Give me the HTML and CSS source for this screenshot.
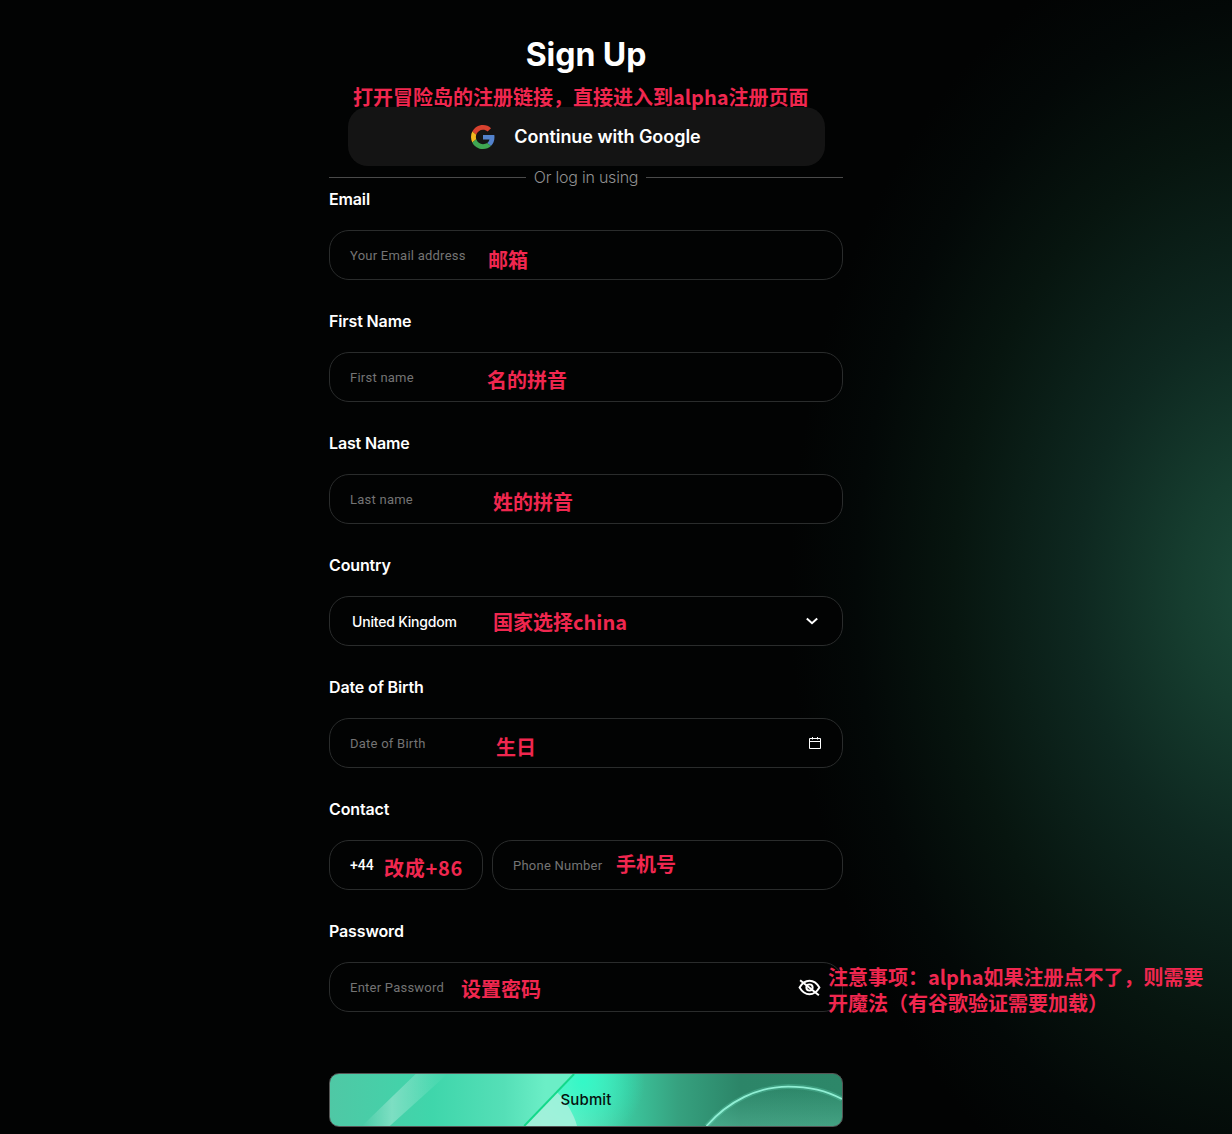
FILE: index.html
```html
<!DOCTYPE html>
<html lang="zh">
<head>
<meta charset="utf-8">
<title>Sign Up</title>
<link rel="stylesheet" href="styles.css">
</head>
<body>
<main class="page">
  <form class="form">
    <h1 class="title">Sign Up</h1>
    <button type="button" class="google">
      <svg class="google-icon" viewBox="0 0 48 48" width="24" height="24">
        <path fill="#D8422F" d="M24 9.5c3.54 0 6.71 1.22 9.21 3.6l6.85-6.85C35.9 2.38 30.47 0 24 0 14.62 0 6.51 5.38 2.56 13.22l7.98 6.19C12.43 13.72 17.74 9.5 24 9.5z"/>
        <path fill="#5382CC" d="M46.98 24.55c0-1.57-.15-3.09-.38-4.55H24v9.02h12.94c-.58 2.96-2.26 5.48-4.78 7.18l7.73 6c4.51-4.18 7.09-10.36 7.09-17.65z"/>
        <path fill="#F2B81E" d="M10.53 28.59c-.48-1.45-.76-2.99-.76-4.59s.27-3.14.76-4.59l-7.98-6.19C.92 16.46 0 20.12 0 24c0 3.88.92 7.54 2.56 10.78l7.97-6.19z"/>
        <path fill="#3FA652" d="M24 48c6.48 0 11.93-2.13 15.89-5.81l-7.73-6c-2.15 1.45-4.92 2.3-8.16 2.3-6.26 0-11.57-4.22-13.47-9.91l-7.98 6.19C6.51 42.62 14.62 48 24 48z"/>
      </svg>
      <span>Continue with Google</span>
    </button>
    <div class="divider"><span>Or log in using</span></div>

    <div class="field">
      <label class="label">Email</label>
      <div class="box"><span class="ph">Your Email address</span></div>
    </div>
    <div class="field">
      <label class="label">First Name</label>
      <div class="box"><span class="ph">First name</span></div>
    </div>
    <div class="field">
      <label class="label">Last Name</label>
      <div class="box"><span class="ph">Last name</span></div>
    </div>
    <div class="field">
      <label class="label">Country</label>
      <div class="box box-select">
        <span class="value">United Kingdom</span>
        <svg class="icon" viewBox="0 0 16 16" width="16" height="16"><path d="M2.800 5.500l5.200 4.700 5.200-4.700" fill="none" stroke="#fff" stroke-width="2"/></svg>
      </div>
    </div>
    <div class="field">
      <label class="label">Date of Birth</label>
      <div class="box">
        <span class="ph">Date of Birth</span>
        <svg class="icon" viewBox="0 0 14 14" width="14" height="14"><path d="M1.500 2.500h11v10h-11zM1.500 5.500h11M4.500 1v2.500M9.500 1v2.500" fill="none" stroke="#fff" stroke-width="1"/></svg>
      </div>
    </div>
    <div class="field">
      <label class="label">Contact</label>
      <div class="contact">
        <div class="box box-code"><span class="code">+44</span></div>
        <div class="box box-phone"><span class="ph">Phone Number</span></div>
      </div>
    </div>
    <div class="field">
      <label class="label">Password</label>
      <div class="box">
        <span class="ph">Enter Password</span>
        <svg class="icon" viewBox="0 0 24 24" width="25" height="25" fill="none" stroke="#fff" stroke-width="1.900"><path d="M2.500 12c2.500-4.300 5.700-6.500 9.500-6.500s7 2.200 9.500 6.500c-2.500 4.300-5.700 6.500-9.500 6.500S5 16.300 2.500 12z"/><circle cx="12" cy="12" r="3"/><path d="M3 5l18 14.500"/></svg>
      </div>
    </div>

    <button type="button" class="submit">
      <svg class="submit-art" viewBox="0 0 514 54" preserveAspectRatio="none">
        <defs>
          <linearGradient id="band" x1="0" y1="0" x2="1" y2="0">
            <stop offset="0" stop-color="#fff" stop-opacity="0"/>
            <stop offset=".35" stop-color="#fff" stop-opacity=".3"/>
            <stop offset="1" stop-color="#fff" stop-opacity="0"/>
          </linearGradient>
          <radialGradient id="spot" cx="254" cy="8" r="62" gradientUnits="userSpaceOnUse">
            <stop offset="0" stop-color="#2ffac8" stop-opacity=".9"/>
            <stop offset="1" stop-color="#2ffac8" stop-opacity="0"/>
          </radialGradient>
          <linearGradient id="arcfill" x1="0" y1="0" x2="0" y2="1">
            <stop offset="0" stop-color="#6fd4b4" stop-opacity="0"/>
            <stop offset="1" stop-color="#6fd4b4" stop-opacity=".34"/>
          </linearGradient>
        </defs>
        <polygon points="86,0 118,0 60,54 32,54" fill="url(#band)"/>
        <polygon points="245,0 320,0 320,54 195,54" fill="url(#spot)"/>
        <path d="M227 18C237 28 245 42 248 54H195Z" fill="#b4f2e0" opacity=".75"/>
        <path d="M245 0L195 54" stroke="#12d98a" stroke-width="2"/>
        <path d="M378 54C400 28 430 13 460 13C480 13 500 18 514 26V54Z" fill="url(#arcfill)"/>
        <path d="M378 54C400 28 430 13 460 13C480 13 500 18 514 26" fill="none" stroke="#6fe3c2" stroke-width="5" opacity=".25"/>
        <path d="M378 54C400 28 430 13 460 13C480 13 500 18 514 26" fill="none" stroke="#90efd4" stroke-width="1.800"/>
      </svg>
      <span class="submit-text">Submit</span>
    </button>
  </form>

  <div class="note n-intro">打开冒险岛的注册链接，直接进入到alpha注册页面</div>
  <div class="note n-email">邮箱</div>
  <div class="note n-first">名的拼音</div>
  <div class="note n-last">姓的拼音</div>
  <div class="note n-country">国家选择china</div>
  <div class="note n-dob">生日</div>
  <div class="note n-code">改成+86</div>
  <div class="note n-phone">手机号</div>
  <div class="note n-pass">设置密码</div>
  <div class="note n-warn">注意事项：alpha如果注册点不了，则需要<br>开魔法（有谷歌验证需要加载）</div>
</main>
</body>
</html>
```
FILE: styles.css
```css
* { box-sizing: border-box; }
html, body { margin: 0; height: 1134px; overflow: hidden; }
body {
  background:
    radial-gradient(ellipse 480px 680px at 1270px 590px, #1c4b3a 0%, #163d2f 18%, #0e2820 40%, #07150f 66%, #030807 86%, rgba(2,3,3,0) 100%),
    #020303;
  font-family: Inter, "Noto Sans", sans-serif;
  color: #fff;
}
.page { position: relative; height: 1134px; padding: 35px 0 0 329px; }
.form { width: 514px; display: flex; flex-direction: column; }
.title {
  margin: 0 0 32px;
  font-size: 32px;
  line-height: 40px;
  font-weight: 700;
  letter-spacing: -0.05px;
  text-align: center;
}
.google {
  align-self: center;
  width: 477px;
  height: 59px;
  background: #141414;
  border: 0;
  border-radius: 20px;
  color: #fff;
  font: 600 18px Inter, sans-serif;
  letter-spacing: -0.05px;
  display: flex;
  align-items: center;
  justify-content: center;
  gap: 19px;
  padding: 0;
}
.google-icon { display: block; }
.divider {
  height: 22px;
  display: flex;
  align-items: center;
  gap: 8px;
  color: #909090;
  font-size: 16px;
  font-weight: 300;
  letter-spacing: -0.22px;
}
.divider::before, .divider::after { content: ""; flex: 1; height: 1px; background: #4a4a4a; }
.field { display: flex; flex-direction: column; gap: 20px; margin-bottom: 30px; }
.label { height: 22px; line-height: 22px; font-size: 16px; font-weight: 600; letter-spacing: -0.14px; }
.box {
  height: 50px;
  border: 1px solid #2a2c2c;
  border-radius: 20px;
  display: flex;
  align-items: center;
  justify-content: space-between;
  padding: 0 20px;
  background: #020303;
}
.ph { font: 400 13px Roboto, sans-serif; letter-spacing: 0.24px; color: #747474; }
.value { font: 500 14px Inter, sans-serif; letter-spacing: -0.2px; margin-left: 2px; }
.code { font: 500 14px Roboto, sans-serif; }
.icon { display: block; }
.box-select { padding-right: 22px; }
.contact { display: flex; gap: 9px; }
.box-code { width: 154px; flex: none; }
.box-phone { flex: 1; }
.submit {
  position: relative;
  margin-top: 31px;
  height: 54px;
  padding: 0 0 2px;
  overflow: hidden;
  border: 1px solid #555;
  border-radius: 10px;
  background: linear-gradient(90deg, #4fc8a5 0%, #3fd6ab 20%, #55dfb7 34%, #6beec6 42%, #6beec6 47%, #3cc79e 58%, #36a17f 68%, #2c8568 80%, #2d8769 100%);
}
.submit-art { position: absolute; inset: 0; width: 100%; height: 100%; display: block; }
.submit-text { position: relative; font: 500 15px Inter, sans-serif; letter-spacing: 0.15px; color: #06120e; }
.note {
  position: absolute;
  font: 700 20px/26px "Noto Sans CJK SC", "Noto Sans", sans-serif;
  color: #f0274f;
  white-space: nowrap;
}
.n-intro { left: 353px; top: 84px; }
.n-email { left: 488px; top: 247px; }
.n-first { left: 487px; top: 367px; }
.n-last { left: 493px; top: 489px; }
.n-country { left: 493px; top: 609px; }
.n-dob { left: 496px; top: 734px; }
.n-code { left: 384px; top: 855px; letter-spacing: 0.7px; }
.n-phone { left: 616px; top: 851px; }
.n-pass { left: 461px; top: 976px; }
.n-warn { left: 828px; top: 964px; }
```
